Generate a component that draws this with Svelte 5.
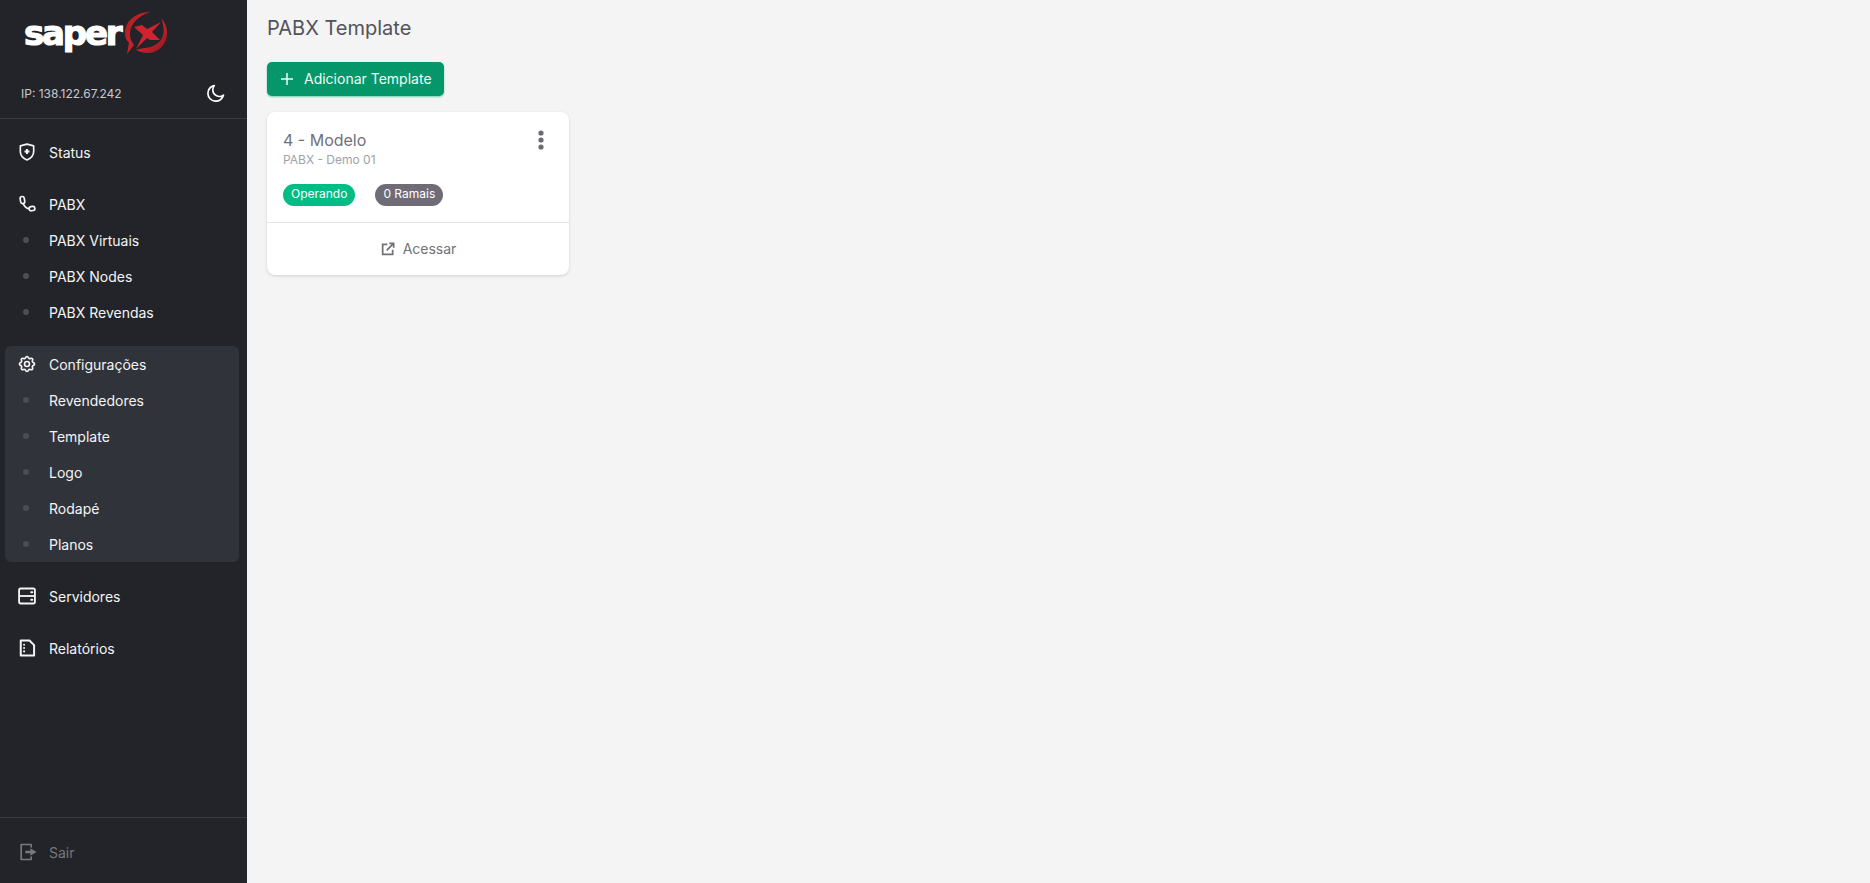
<script>
	const pabxLinks = ['PABX Virtuais', 'PABX Nodes', 'PABX Revendas'];
	const configLinks = ['Revendedores', 'Template', 'Logo', 'Rodapé', 'Planos'];
</script>

<div class="layout">
	<aside class="sidebar">
		<div class="brand">
			<div class="logo">
				<span class="logo-text">saper</span>
				<svg class="logo-mark" width="46" height="46" viewBox="122 8 46 46">
					<defs>
						<linearGradient id="red" x1="0" y1="0" x2="1" y2="1">
							<stop offset="0" stop-color="#a81c22" />
							<stop offset="0.5" stop-color="#c9222a" />
							<stop offset="1" stop-color="#8c171c" />
						</linearGradient>
					</defs>
					<path fill="url(#red)" d="M150 10C136 10 125 19 125 31C125 35 126 38 129 41L127 52L134 43C131 39 129.500 35 130 30C131 21 140 13 150 10Z" />
					<path fill="url(#red)" d="M161 16C166 21 167.500 27 167 33C166 43 158 51 148 51C144 51 140 50 136 48C140 46.500 144 46 148 45.500C156 44.500 163 38 163.500 31C164 26 163 20 161 16Z" />
					<path fill="#cf2430" d="M161 20L152 30L160 38L150 38L147 36L136 47L143 33L134 25L142 23L147 27Z" />
				</svg>
			</div>
			<div class="ip-row">
				<span>IP: 138.122.67.242</span>
				<svg width="20" height="20" viewBox="0 0 24 24" fill="none" stroke="currentColor" stroke-width="2" stroke-linecap="round" stroke-linejoin="round">
					<path d="M10 3a8 8 0 0 0 11 11.500A9.500 9.500 0 1 1 10 3z" />
				</svg>
			</div>
		</div>

		<nav class="menu">
			<a class="item" href="#status">
				<svg class="icon" viewBox="0 0 24 24" fill="none" stroke="currentColor" stroke-width="2" stroke-linejoin="round">
					<path d="M12 2.500l8 2.200v6.600c0 4.600-3.200 8.200-8 10.200-4.800-2-8-5.600-8-10.200V4.700z" />
					<path d="M12 8.500v6M9 11.500h6" stroke-width="2.400" />
				</svg>
				Status
			</a>

			<div class="group">
				<a class="item" href="#pabx">
					<svg class="icon" viewBox="0 0 24 24" fill="none" stroke="currentColor" stroke-width="2" stroke-linecap="round">
						<rect x="4" y="3" width="5" height="8.500" rx="2.500" transform="rotate(-10 6.500 7)" />
						<rect x="14.500" y="15" width="7" height="5" rx="2.500" transform="rotate(-10 18 17.500)" />
						<path d="M7.500 11.500C8.500 14 11 17 14.500 18" />
					</svg>
					PABX
				</a>
				{#each pabxLinks as link}
					<a class="item sub" href="#pabx"><span class="dot"></span>{link}</a>
				{/each}
			</div>

			<div class="group active">
				<a class="item" href="#config">
					<svg class="icon" viewBox="0 0 24 24" fill="none" stroke="currentColor" stroke-width="2" stroke-linecap="round" stroke-linejoin="round">
						<path d="M10.325 4.317c.426-1.756 2.924-1.756 3.350 0a1.724 1.724 0 0 0 2.573 1.066c1.543-.94 3.310.826 2.370 2.370a1.724 1.724 0 0 0 1.065 2.572c1.756.426 1.756 2.924 0 3.350a1.724 1.724 0 0 0-1.066 2.573c.94 1.543-.826 3.310-2.370 2.370a1.724 1.724 0 0 0-2.572 1.065c-.426 1.756-2.924 1.756-3.350 0a1.724 1.724 0 0 0-2.573-1.066c-1.543.94-3.310-.826-2.370-2.370a1.724 1.724 0 0 0-1.065-2.572c-1.756-.426-1.756-2.924 0-3.350a1.724 1.724 0 0 0 1.066-2.573c-.94-1.543.826-3.310 2.370-2.370.996.608 2.296.07 2.572-1.065z" />
						<circle cx="12" cy="12" r="3" />
					</svg>
					Configurações
				</a>
				{#each configLinks as link}
					<a class="item sub" href="#config"><span class="dot"></span>{link}</a>
				{/each}
			</div>

			<a class="item" href="#servers">
				<svg class="icon" viewBox="0 0 24 24" fill="none" stroke="currentColor" stroke-width="2.200" stroke-linejoin="round">
					<rect x="2.500" y="3" width="19" height="18" rx="2" />
					<path d="M2.500 12h19" />
					<path d="M17 7.500h1.500M17 16.500h1.500" stroke-linecap="round" />
				</svg>
				Servidores
			</a>

			<a class="item" href="#reports">
				<svg class="icon" viewBox="0 0 24 24" fill="none" stroke="currentColor" stroke-width="2.400" stroke-linejoin="round">
					<path d="M4.500 3H15l5.500 5.500V21h-16z" />
					<path d="M8.500 8v.1M8.500 12v.1M8.500 16v.1" stroke-linecap="round" />
				</svg>
				Relatórios
			</a>
		</nav>

		<div class="logout">
			<a class="item" href="#logout">
				<svg class="icon" viewBox="0 0 24 24" fill="none" stroke="currentColor" stroke-width="2">
					<path d="M17 6.500V3H5v18h12v-3.500" stroke-linejoin="round" />
					<path d="M10 12h7" stroke-width="3" />
					<path d="M16 7.500l7.500 4.500-7.500 4.500z" fill="currentColor" stroke="none" />
				</svg>
				Sair
			</a>
		</div>
	</aside>

	<main class="content">
		<h1>PABX Template</h1>

		<button class="add-btn">
			<svg width="16" height="16" viewBox="0 0 16 16" fill="none" stroke="currentColor" stroke-width="1.500">
				<path d="M8 2v12M2 8h12" />
			</svg>
			Adicionar Template
		</button>

		<article class="card">
			<div class="card-body">
				<div class="card-head">
					<div>
						<h2>4 - Modelo</h2>
						<p>PABX - Demo 01</p>
					</div>
					<svg class="more" width="6" height="20" viewBox="0 0 6 20" fill="currentColor">
						<circle cx="3" cy="3" r="2.600" />
						<circle cx="3" cy="10" r="2.600" />
						<circle cx="3" cy="17" r="2.600" />
					</svg>
				</div>
				<div class="badges">
					<span class="badge ok">Operando</span>
					<span class="badge muted">0 Ramais</span>
				</div>
			</div>
			<a class="card-foot" href="#open">
				<svg width="16" height="16" viewBox="0 0 24 24" fill="none" stroke="currentColor" stroke-width="2.600">
					<path d="M11 5H4v15h15v-7" />
					<path d="M10 14L20 4M14 3.500h6.500V10" />
				</svg>
				Acessar
			</a>
		</article>
	</main>
</div>

<style>
	:global(body) {
		background: #f4f4f4;
		font-family: Inter, "Liberation Sans", sans-serif;
	}

	.layout {
		display: flex;
		height: 100vh;
		overflow: hidden;
	}

	.sidebar {
		width: 247px;
		flex-shrink: 0;
		display: flex;
		flex-direction: column;
		background: #222429;
		color: #f4f4f5;
	}

	.brand {
		height: 119px;
		box-sizing: border-box;
		border-bottom: 1px solid #3a3c42;
		display: flex;
		flex-direction: column;
	}

	.logo {
		display: flex;
		align-items: flex-start;
		padding: 10px 0 0 24px;
		height: 66px;
		box-sizing: border-box;
	}

	.logo-text {
		font-family: "DejaVu Sans", sans-serif;
		font-weight: 700;
		font-size: 34px;
		line-height: 40px;
		letter-spacing: -2.200px;
		color: #fff;
		-webkit-text-stroke: 1.200px #fff;
		margin-top: 3px;
		width: 97px;
	}

	.logo-mark {
		margin-left: 1px;
	}

	.ip-row {
		display: flex;
		justify-content: space-between;
		align-items: center;
		padding: 0 21px;
		font-size: 12px;
		color: #c9cacd;
		height: 20px;
		margin-top: 17px;
	}

	.ip-row svg {
		color: #fff;
	}

	.menu {
		flex: 1;
		display: flex;
		flex-direction: column;
		gap: 16px;
		padding: 15px 8px 0 5px;
	}

	.item {
		display: flex;
		align-items: center;
		gap: 12px;
		height: 36px;
		padding-left: 12px;
		font-size: 14px;
		color: #f4f4f5;
		text-decoration: none;
	}

	.icon {
		width: 20px;
		height: 20px;
		flex-shrink: 0;
	}

	.sub {
		gap: 20px;
		padding-left: 18px;
	}

	.dot {
		width: 6px;
		height: 6px;
		border-radius: 50%;
		background: #4c4d56;
		flex-shrink: 0;
	}

	.group.active {
		background: #31333a;
		border-radius: 6px;
	}

	.logout {
		height: 66px;
		box-sizing: border-box;
		border-top: 1px solid #3a3c42;
		padding: 16px 8px 0 5px;
	}

	.logout .item {
		color: #77787e;
	}

	.content {
		flex: 1;
		padding: 16px 20px;
		min-width: 0;
	}

	h1 {
		margin: 0 0 22px;
		font-size: 20px;
		line-height: 24px;
		font-weight: 400;
		color: #52525b;
	}

	.add-btn {
		display: flex;
		align-items: center;
		gap: 9px;
		height: 34px;
		width: 177px;
		padding: 0 0 1px 12px;
		border: none;
		border-radius: 5px;
		background: #059669;
		box-shadow: 0 1px 2px rgba(16, 185, 129, 0.6);
		color: #f0fdf8;
		font: inherit;
		font-size: 14px;
		white-space: nowrap;
	}

	.card {
		width: 302px;
		margin-top: 16px;
		background: #fff;
		border-radius: 8px;
		box-shadow: 0 1px 3px rgba(0, 0, 0, 0.15);
	}

	.card-body {
		padding: 17px 16px 0;
		height: 111px;
		box-sizing: border-box;
		border-bottom: 1px solid #e4e4e7;
	}

	.card-head {
		display: flex;
		justify-content: space-between;
		align-items: flex-start;
	}

	.more {
		color: #6b6b75;
		margin: 1px 9px 0 0;
	}

	h2 {
		margin: 0;
		font-size: 16px;
		line-height: 22px;
		font-weight: 400;
		color: #71717a;
	}

	.card-head p {
		margin: 1px 0 0;
		font-size: 12px;
		line-height: 16px;
		color: #a1a1aa;
	}

	.badges {
		display: flex;
		gap: 20px;
		margin-top: 16px;
	}

	.badge {
		height: 22px;
		line-height: 20px;
		padding: 0 8px;
		border-radius: 11px;
		font-size: 12px;
		color: #fff;
	}

	.ok {
		background: #00bd85;
	}

	.muted {
		background: #6f6c78;
	}

	.card-foot {
		display: flex;
		justify-content: center;
		align-items: center;
		gap: 7px;
		height: 52px;
		padding-bottom: 1px;
		box-sizing: border-box;
		font-size: 14px;
		color: #71717a;
		text-decoration: none;
	}
</style>
